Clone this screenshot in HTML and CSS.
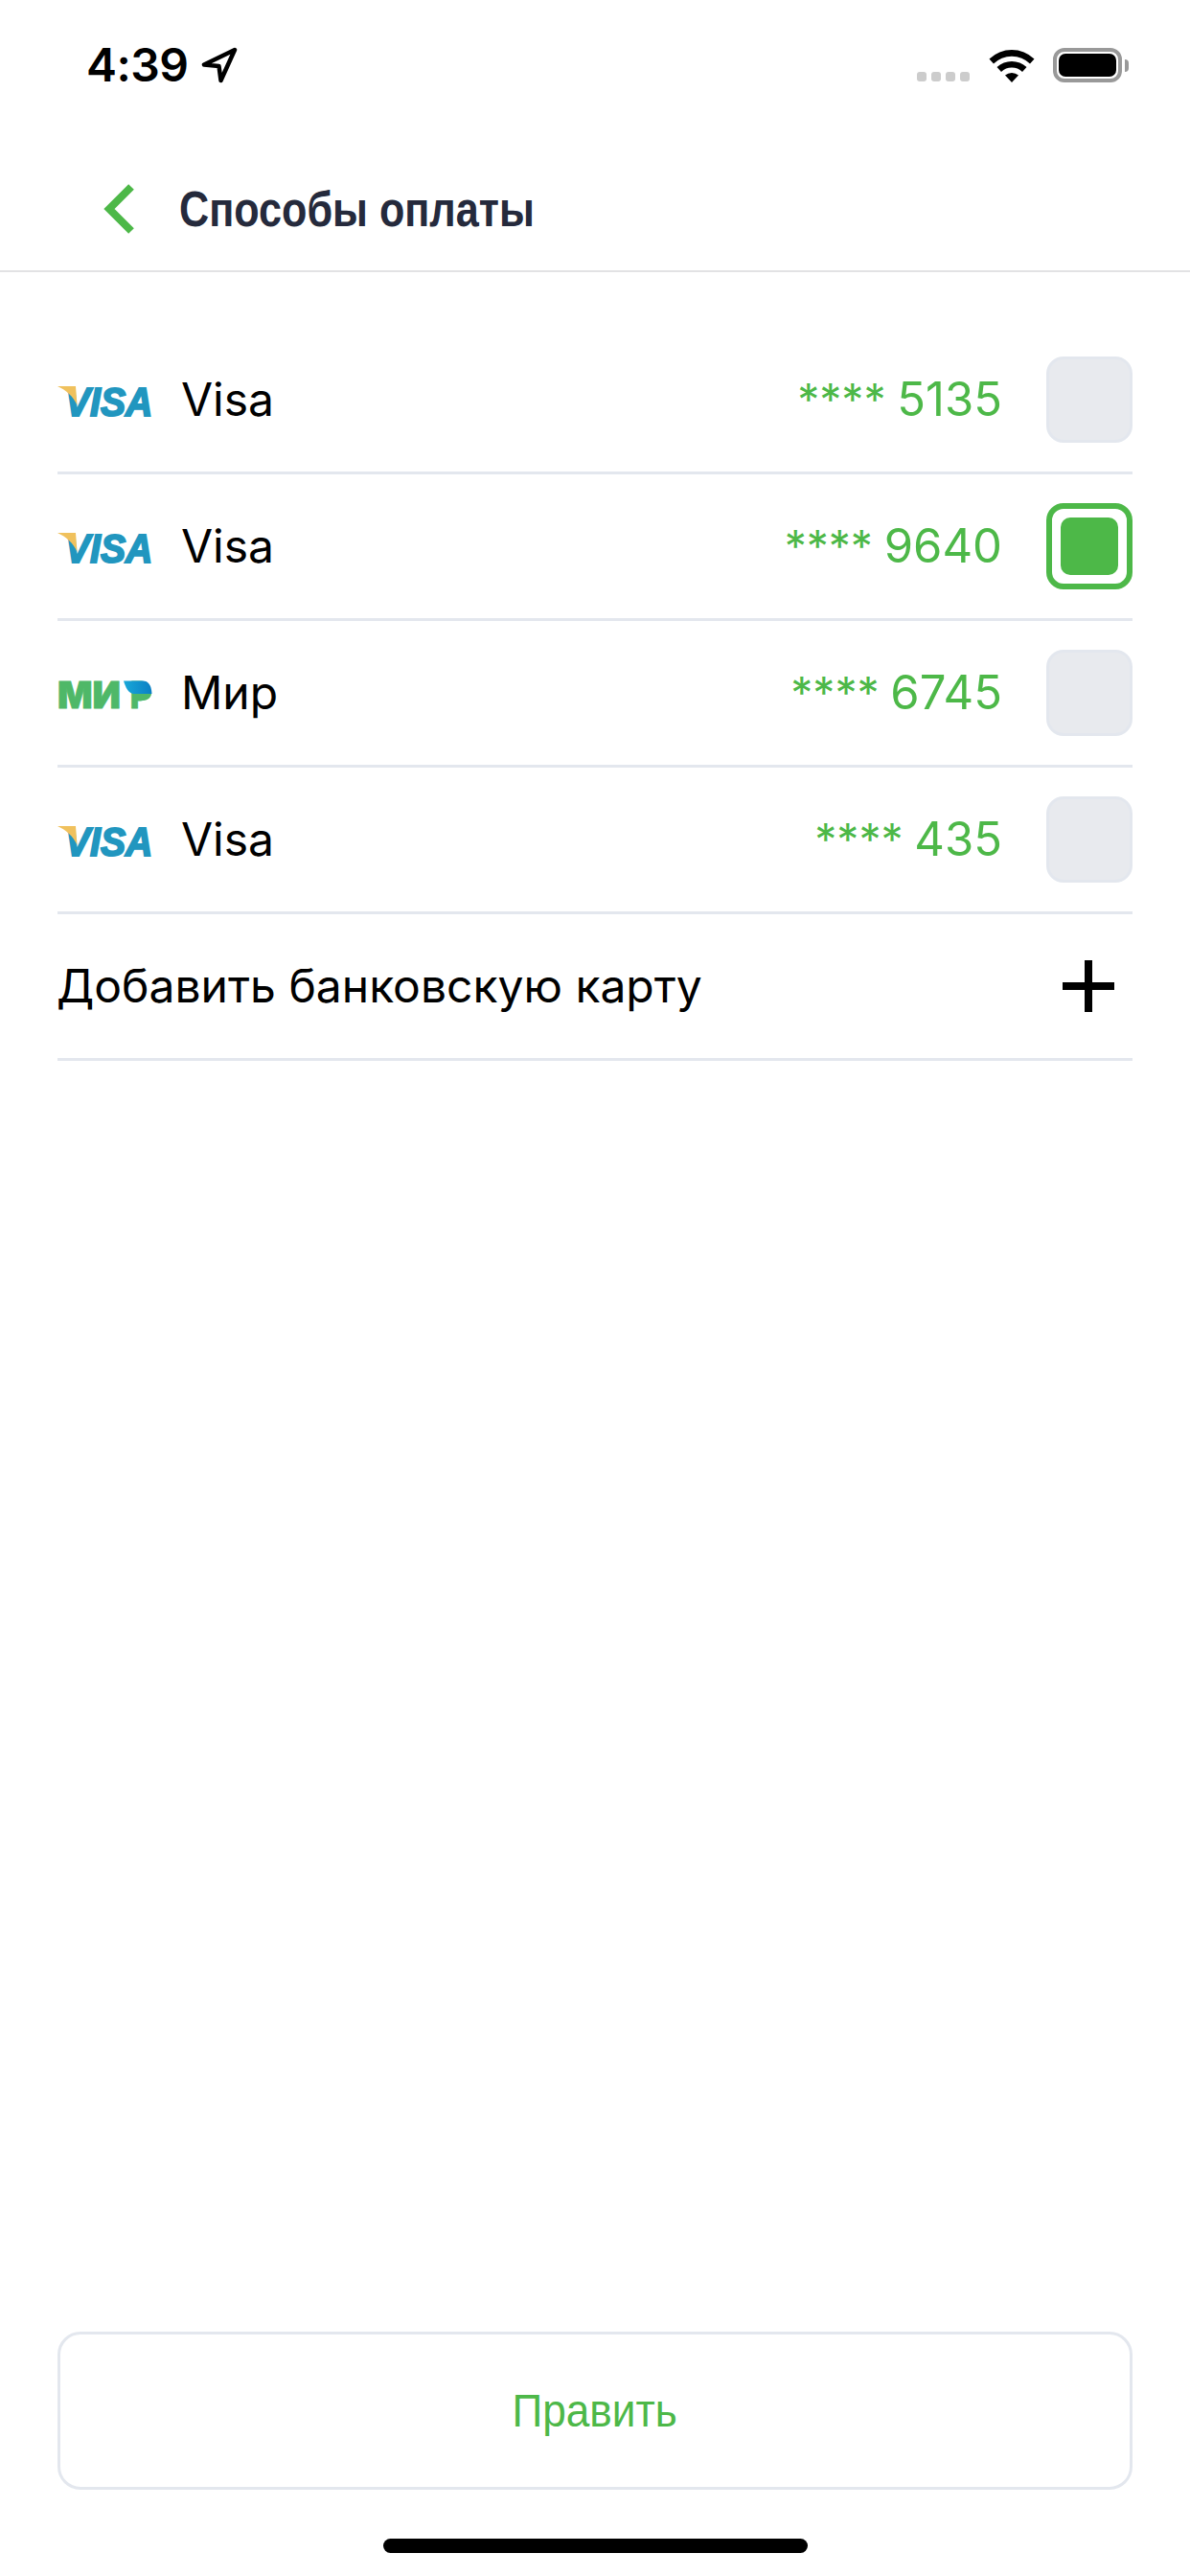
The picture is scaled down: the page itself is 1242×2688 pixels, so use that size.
FILE: index.html
```html
<!DOCTYPE html>
<html lang="ru">
<head>
<meta charset="utf-8">
<title>Способы оплаты</title>
<link rel="stylesheet" href="styles.css">
</head>
<body>
<div class="page">
  <div class="status">
    <div class="status-left">
      <span class="time">4:39</span>
      <svg class="loc" viewBox="0 0 38 38"><path d="M35 3 L3 18.5 L18.5 20 L20.5 35 Z" fill="none" stroke="#000" stroke-width="4.5" stroke-linejoin="round"/></svg>
    </div>
    <div class="status-right">
      <div class="dots"><i></i><i></i><i></i><i></i></div>
      <svg class="wifi" viewBox="0 0 48 36"><path d="M0.5 11.5 A34 34 0 0 1 47.5 11.5 L43 16.5 A27 27 0 0 0 5 16.5 Z M8.5 20 A23 23 0 0 1 39.5 20 L35 25 A16 16 0 0 0 13 25 Z M17 28.500 A11 11 0 0 1 31 28.500 L24 36 Z"/></svg>
      <div class="battery"><div class="battery-body"><div class="battery-fill"></div></div><div class="battery-nub"></div></div>
    </div>
  </div>
  <header class="nav">
    <svg class="back" viewBox="0 0 34 52"><path d="M29 3 L6 26 L29 49" fill="none" stroke="#4db848" stroke-width="8"/></svg>
    <h1 class="title">Способы оплаты</h1>
  </header>
  <main class="list">
    <div class="row">
      <svg class="logo" viewBox="0 0 100 60"><text class="visa" transform="translate(8 47) scale(0.91 1)">VISA</text><path class="swoosh" d="M0 16 L19 16 L20.500 36 C17 27 9 20 0 16 Z"/></svg>
      <span class="name">Visa</span>
      <span class="num"><span class="stars">****</span> 5135</span>
      <span class="check"></span>
    </div>
    <div class="row">
      <svg class="logo" viewBox="0 0 100 60"><text class="visa" transform="translate(8 47) scale(0.91 1)">VISA</text><path class="swoosh" d="M0 16 L19 16 L20.500 36 C17 27 9 20 0 16 Z"/></svg>
      <span class="name">Visa</span>
      <span class="num"><span class="stars">****</span> 9640</span>
      <span class="check check-on"><span class="check-dot"></span></span>
    </div>
    <div class="row">
      <svg class="logo" viewBox="0 0 100 60"><defs><linearGradient id="mirblue" x1="0" x2="1" y1="0" y2="0"><stop offset="0" stop-color="#1aa8d8"/><stop offset="1" stop-color="#0a7fc4"/></linearGradient></defs><text class="mir" transform="translate(0 46) scale(0.98 1)">МИ</text><text class="mir" transform="translate(76 46) scale(0.8 1)">Р</text><path class="mir-bowl" d="M78 31 H98 C97.500 35 94 38 89 38 H78 Z"/><path fill="url(#mirblue)" d="M69 17.500 H89 C95 17.500 98 22 98.500 31 L80 31 C74 31 71 24 69 17.500 Z"/></svg>
      <span class="name">Мир</span>
      <span class="num"><span class="stars">****</span> 6745</span>
      <span class="check"></span>
    </div>
    <div class="row">
      <svg class="logo" viewBox="0 0 100 60"><text class="visa" transform="translate(8 47) scale(0.91 1)">VISA</text><path class="swoosh" d="M0 16 L19 16 L20.500 36 C17 27 9 20 0 16 Z"/></svg>
      <span class="name">Visa</span>
      <span class="num"><span class="stars">****</span> 435</span>
      <span class="check"></span>
    </div>
    <div class="row">
      <span class="add">Добавить банковскую карту</span>
      <svg class="plus" viewBox="0 0 54 54"><path d="M27 0 V54 M0 27 H54" stroke="#000" stroke-width="8" fill="none"/></svg>
    </div>
  </main>
  <div class="footer">
    <button class="edit"><span class="edit-label">Править</span></button>
    <div class="home"></div>
  </div>
</div>
</body>
</html>
```
FILE: styles.css
```css
* { box-sizing: border-box; }
html, body { margin: 0; padding: 0; background: #fff; }
body { font-family: Inter, "Liberation Sans", sans-serif; color: #000; }
.page { width: 1242px; height: 2688px; display: flex; flex-direction: column; }

.status { height: 130px; padding: 50px 64px 0 90px; display: flex; justify-content: space-between; align-items: flex-start; }
.status-left { display: flex; align-items: center; gap: 13px; height: 36px; }
.time { font-size: 48px; font-weight: 600; line-height: 36px; letter-spacing: -0.5px; }
.loc { width: 38px; height: 38px; display: block; }
.status-right { display: flex; align-items: flex-start; height: 36px; }
.dots { display: flex; gap: 5px; margin: 25px 20px 0 0; }
.dots i { width: 10px; height: 10px; background: #ccc; border-radius: 3px; display: block; }
.wifi { width: 48px; height: 36px; display: block; margin-right: 19px; }
.battery { display: flex; align-items: center; height: 36px; }
.battery-body { width: 72px; height: 36px; border: 4px solid #999; border-radius: 12px; padding: 2px; }
.battery-fill { width: 100%; height: 100%; background: #000; border-radius: 7px; }
.battery-nub { width: 4px; height: 13px; margin-left: 3px; background: #999; border-radius: 0 6px 6px 0; }

.nav { height: 154px; border-bottom: 2px solid #e2e2e4; display: flex; align-items: center; padding: 24px 0 0 108px; }
.back { width: 34px; height: 52px; display: block; }
.title { margin: 0 0 0 45px; font-family: "Liberation Sans", sans-serif; font-size: 52px; font-weight: 700; color: #252a3c; line-height: 60px; transform: scaleX(0.83); transform-origin: left center; white-space: nowrap; }

.list { margin-top: 58px; padding: 0 60px; }
.row { height: 153px; border-bottom: 3px solid #e3e7ee; display: flex; align-items: center; }
.logo { width: 100px; height: 60px; display: block; flex: none; overflow: visible; }
.swoosh { fill: #f0c15d; }
.visa { font-family: "Liberation Sans", sans-serif; font-size: 43px; font-weight: 700; font-style: italic; fill: #2196bf; stroke: #2196bf; stroke-width: 2px; }
.mir { font-family: Inter, sans-serif; font-size: 39px; font-weight: 900; fill: #4fb868; stroke: #4fb868; stroke-width: 0.8px; }
.mir-bowl { fill: #4fb868; }
.name { margin-left: 29px; font-size: 48px; padding-bottom: 2px; }
.num { margin-left: auto; font-size: 49px; color: #4db848; padding-bottom: 2px; }
.stars { font-size: 46px; margin-right: -2px; }
.check { width: 90px; height: 90px; margin-left: 46px; border: 3px solid #e3e7ee; background: #e8eaee; border-radius: 18px; display: flex; align-items: center; justify-content: center; flex: none; }
.check-on { border: 6px solid #4db848; background: #fff; }
.check-dot { width: 60px; height: 60px; background: #4db848; border-radius: 10px; }
.add { font-size: 48px; margin-left: -1px; padding-bottom: 2px; }
.plus { width: 54px; height: 54px; display: block; margin-left: auto; margin-right: 19px; }

.footer { margin-top: auto; padding: 0 60px 24px; display: flex; flex-direction: column; align-items: center; }
.edit { width: 1122px; height: 165px; background: #fff; border: 3px solid #e3e7ee; border-radius: 24px; padding: 0; }
.edit-label { display: inline-block; font-family: "Liberation Sans", sans-serif; font-size: 48px; color: #4db848; transform: scaleX(0.92); }
.home { width: 443px; height: 15px; margin-top: 51px; background: #000; border-radius: 8px; }
```
